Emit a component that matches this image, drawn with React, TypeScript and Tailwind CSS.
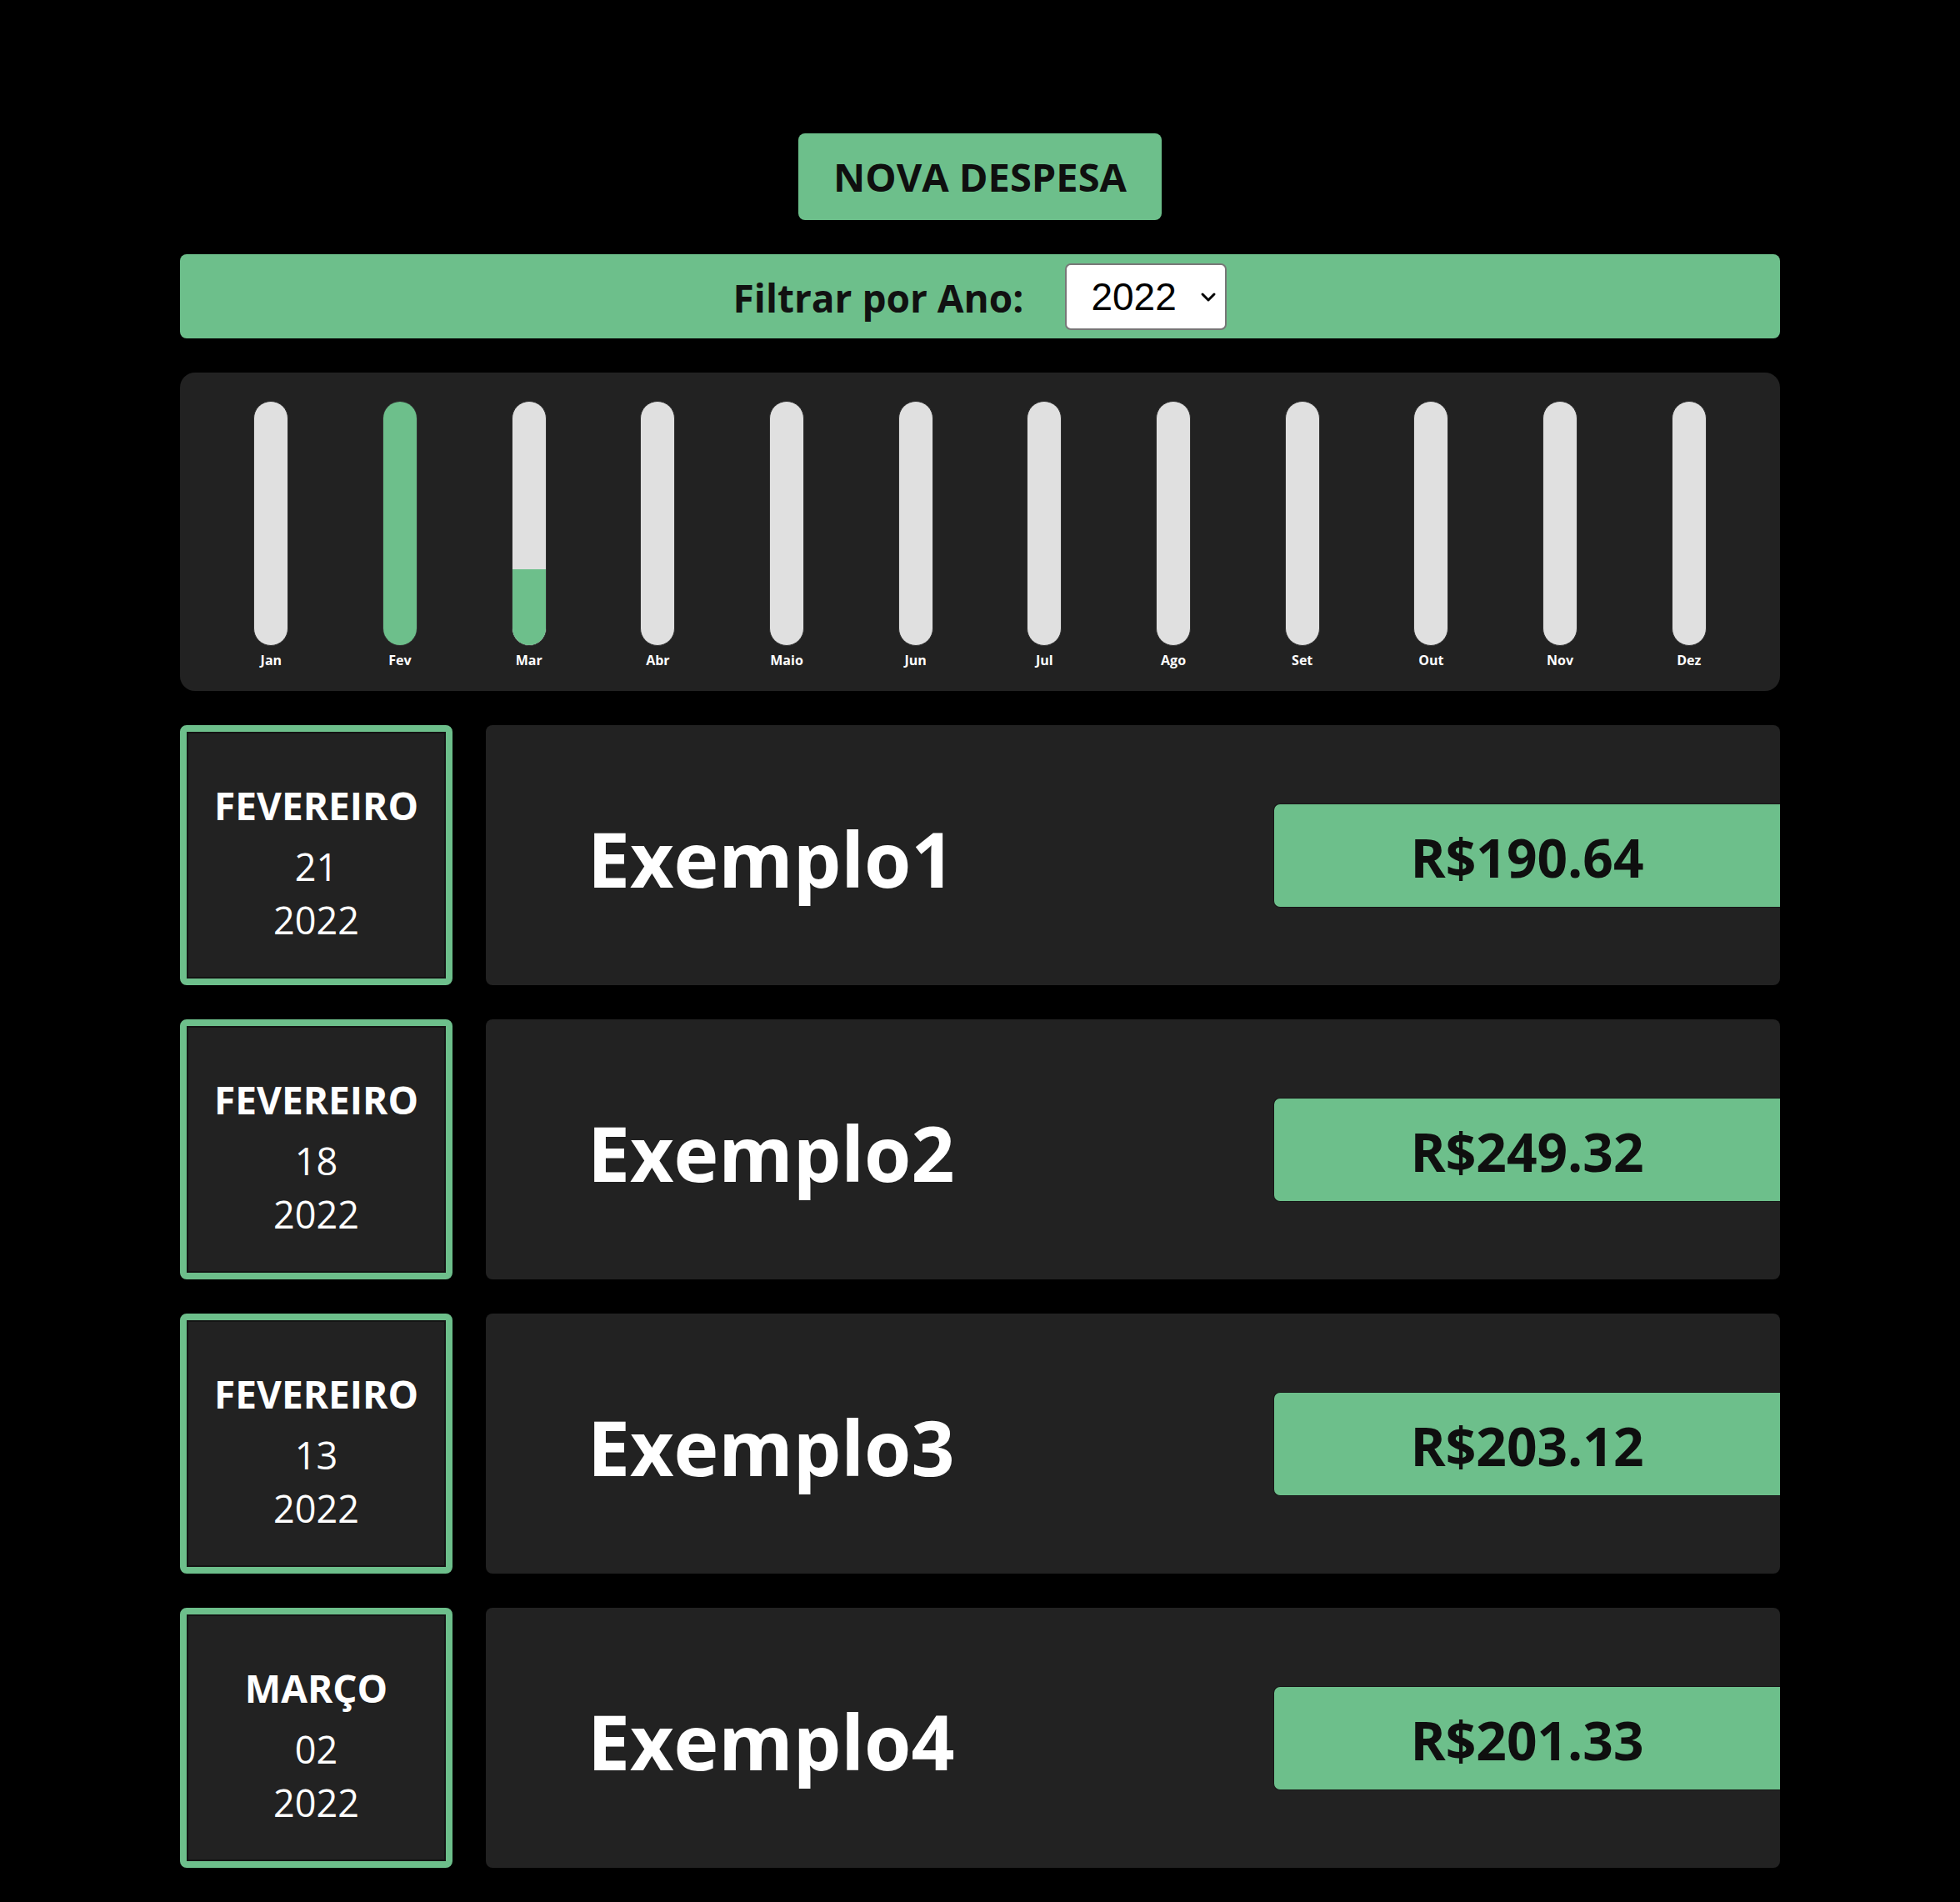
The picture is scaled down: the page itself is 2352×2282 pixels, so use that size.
import React from "react";

const months = ["Jan", "Fev", "Mar", "Abr", "Maio", "Jun", "Jul", "Ago", "Set", "Out", "Nov", "Dez"];

type Expense = { month: string; day: string; year: string; title: string; amount: number; m: number };

const expenses: Expense[] = [
  { month: "FEVEREIRO", day: "21", year: "2022", title: "Exemplo1", amount: 190.64, m: 1 },
  { month: "FEVEREIRO", day: "18", year: "2022", title: "Exemplo2", amount: 249.32, m: 1 },
  { month: "FEVEREIRO", day: "13", year: "2022", title: "Exemplo3", amount: 203.12, m: 1 },
  { month: "MARÇO", day: "02", year: "2022", title: "Exemplo4", amount: 201.33, m: 2 },
];

const font = { fontFamily: '"Open Sans", "Noto Sans", sans-serif' };

export default function App() {
  const totals = months.map((_, i) =>
    expenses.filter((e) => e.m === i).reduce((s, e) => s + e.amount, 0)
  );
  const max = Math.max(...totals);

  return (
    <div className="min-h-screen w-full bg-black pt-[160px] pb-[44px]" style={font}>
      <div className="mx-auto flex w-[1920px] flex-col gap-[41px]">
        <div className="flex justify-center">
          <button className="flex h-[104px] w-[436px] items-center justify-center rounded-[8px] bg-[#6dbf8b] text-[47px] font-bold text-[#0f0f0f]">
            NOVA DESPESA
          </button>
        </div>

        <div className="flex h-[101px] items-center justify-center gap-[50px] rounded-[8px] bg-[#6dbf8b]">
          <span className="pt-[4px] text-[46px] font-bold text-[#111]">Filtrar por Ano:</span>
          <div className="flex h-[80px] w-[194px] items-center justify-between rounded-[7px] border-2 border-[#777] bg-white pl-[29px] pr-[10px]">
            <span
              className="text-[46px] leading-none text-black"
              style={{ fontFamily: '"Liberation Sans", Arial, sans-serif' }}
            >
              2022
            </span>
            <svg width="20" height="14" viewBox="0 0 20 14" className="mt-[2px]">
              <path d="M3 3 L10 10 L17 3" fill="none" stroke="#000" strokeWidth="3" strokeLinecap="round" strokeLinejoin="round" />
            </svg>
          </div>
        </div>

        <div className="flex h-[382px] rounded-[18px] bg-[#222222] px-8 pt-[34px]">
          {months.map((label, i) => {
            const pct = max > 0 ? Math.round((totals[i] / max) * 100) : 0;
            return (
              <div key={label} className="flex flex-1 flex-col items-center">
                <div className="flex h-[294px] w-[42px] flex-col justify-end overflow-hidden rounded-full border border-[#313131] bg-[#e0e0e0]">
                  <div className="w-full bg-[#6dbf8b]" style={{ height: `${pct}%` }} />
                </div>
                <span className="mt-[7px] text-[16px] font-bold leading-[20px] text-white">{label}</span>
              </div>
            );
          })}
        </div>

        {expenses.map((e) => (
          <div key={e.title} className="flex h-[312px] gap-[40px]">
            <div className="w-[327px] rounded-[8px] border-[8px] border-[#6dbf8b] bg-[#222222]">
              <div className="flex h-full flex-col items-center border-2 border-[#141414] pt-[54px] text-white">
                <span className="text-[46px] font-bold leading-[64px]">{e.month}</span>
                <span className="mt-[10px] text-[45px] leading-[64px]">{e.day}</span>
                <span className="text-[45px] leading-[64px]">{e.year}</span>
              </div>
            </div>
            <div className="flex flex-1 items-center overflow-hidden rounded-[8px] bg-[#222222]">
              <span className="pl-[122px] pt-[8px] text-[91px] font-bold text-white">{e.title}</span>
              <div className="ml-auto flex h-[125px] w-[608px] items-center justify-center rounded-l-[8px] border border-r-0 border-[#161616] bg-[#6dbf8b] pt-[6px]">
                <span className="text-[64px] font-bold text-[#0f0f0f]">R${e.amount.toFixed(2)}</span>
              </div>
            </div>
          </div>
        ))}
      </div>
    </div>
  );
}
